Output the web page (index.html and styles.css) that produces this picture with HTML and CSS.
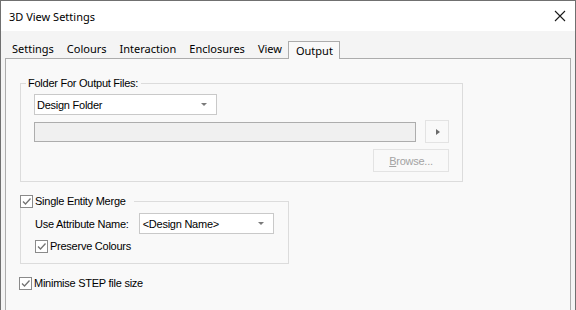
FILE: index.html
```html
<!DOCTYPE html>
<html lang="en">
  <head>
    <meta charset="UTF-8" />
    <title>3D View Settings</title>
    <link rel="stylesheet" href="styles.css">
  </head>
  <body>
    <div class="window">
      <div class="titlebar">
        <span class="title">3D View Settings</span>
        <svg class="close" width="12" height="12" viewBox="0 0 12 12">
          <path d="M1 1 L11 11 M11 1 L1 11" stroke="#1a1a1a" stroke-width="1.1" fill="none" />
        </svg>
      </div>

      <div class="client">
        <div class="tabs">
          <span class="tab">Settings</span>
          <span class="tab">Colours</span>
          <span class="tab">Interaction</span>
          <span class="tab">Enclosures</span>
          <span class="tab">View</span>
          <span class="tab active">Output</span>
        </div>

        <div class="panel">
          <div class="group folder-group">
            <div class="group-title">Folder For Output Files:</div>
            <div class="combo folder-combo">
              <span>Design Folder</span>
              <span class="combo-arrow"></span>
            </div>
            <div class="path-row">
              <div class="path-field"></div>
              <button class="arrow-btn" aria-label="More">
                <svg width="4" height="6" viewBox="0 0 4 6">
                  <path d="M0 0 L4 3 L0 6 Z" fill="#6a6a6a" />
                </svg>
              </button>
            </div>
            <div class="browse-row">
              <button class="browse" disabled><u>B</u>rowse...</button>
            </div>
          </div>

          <div class="group merge-group">
            <label class="group-title check-title">
              <span class="check"><svg width="11" height="11" viewBox="0 0 11 11"><path d="M2 5.5 L4.5 8 L9.5 2.5" stroke="#737373" stroke-width="1.3" fill="none" /></svg></span>
              Single Entity Merge
            </label>
            <div class="attr-row">
              <span>Use Attribute Name:</span>
              <div class="combo attr-combo">
                <span>&lt;Design Name&gt;</span>
                <span class="combo-arrow"></span>
              </div>
            </div>
            <label class="checkline">
              <span class="check"><svg width="11" height="11" viewBox="0 0 11 11"><path d="M2 5.5 L4.5 8 L9.5 2.5" stroke="#737373" stroke-width="1.3" fill="none" /></svg></span>
              Preserve Colours
            </label>
          </div>

          <label class="checkline minimise">
            <span class="check"><svg width="11" height="11" viewBox="0 0 11 11"><path d="M2 5.5 L4.5 8 L9.5 2.5" stroke="#737373" stroke-width="1.3" fill="none" /></svg></span>
            Minimise STEP file size
          </label>
        </div>
      </div>
    </div>
  </body>
</html>
```

FILE: styles.css
```css
* {
  margin: 0;
  padding: 0;
  box-sizing: border-box;
}

body {
  width: 576px;
  height: 310px;
  overflow: hidden;
  background: #f4f4f4;
  font-family: "Liberation Sans", Arial, sans-serif;
  font-size: 11px;
  letter-spacing: -0.25px;
  color: #000;
}

.window {
  width: 576px;
  height: 310px;
  border: 1px solid #707070;
  border-bottom: none;
  display: flex;
  flex-direction: column;
  overflow: hidden;
}

.titlebar {
  height: 30px;
  flex-shrink: 0;
  background: #fff;
  display: flex;
  align-items: center;
  justify-content: space-between;
  padding: 0 9px 0 8px;
  font-family: "Segoe UI", "Noto Sans", sans-serif;
  font-size: 11px;
  letter-spacing: 0;
}

.client {
  flex: 1;
  background: #f4f4f4;
  padding: 0 4px;
  display: flex;
  flex-direction: column;
}

/* tab strip */
.tabs {
  height: 27px;
  flex-shrink: 0;
  display: flex;
  align-items: flex-end;
  font-family: "Segoe UI", "Noto Sans", sans-serif;
  font-size: 11px;
  letter-spacing: 0;
}

.tab {
  line-height: 16px;
  padding: 0 6px 1px 7px;
}

.tab.active {
  height: 18px;
  margin-bottom: -1px;
  padding: 1px 6px 0 7px;
  border: 1px solid #acacac;
  border-bottom: none;
  background: #f9f9f9;
  position: relative;
  z-index: 1;
}

.panel {
  flex: 1;
  background: #f9f9f9;
  border: 1px solid #acacac;
  border-bottom: none;
  padding: 0 0 0 14px;
}

/* group boxes */
.group {
  border: 1px solid #dcdcdc;
}

.group-title {
  display: flex;
  align-items: center;
  width: fit-content;
  line-height: 14px;
  margin: -8px 0 0 -8px;
  padding: 0 3px 0 2px;
  background: #f9f9f9;
}

.folder-group {
  width: 443px;
  margin-top: 24px;
  padding: 0 13px 9px;
}

.combo {
  height: 21px;
  background: #fff;
  border: 1px solid #c9c9c9;
  display: flex;
  align-items: center;
  justify-content: space-between;
  padding: 0 9px 0 2px;
}

.combo-arrow {
  width: 0;
  height: 0;
  border-left: 3px solid transparent;
  border-right: 3px solid transparent;
  border-top: 3px solid #7a7a7a;
}

.folder-combo {
  width: 183px;
  margin-top: 4px;
}

.path-row {
  display: flex;
  align-items: center;
  gap: 9px;
  margin-top: 5px;
}

.path-field {
  width: 382px;
  height: 20px;
  background: #f0f0f0;
  border: 1px solid #adadad;
}

.arrow-btn {
  width: 24px;
  height: 23px;
  background: #f9f9f9;
  border: 1px solid #e3e3e3;
  display: flex;
  align-items: center;
  justify-content: center;
  padding-left: 1px;
}

.browse-row {
  display: flex;
  justify-content: flex-end;
  margin-top: 6px;
}

.browse {
  width: 76px;
  height: 23px;
  background: #f9f9f9;
  border: 1px solid #e3e3e3;
  font: inherit;
  letter-spacing: inherit;
  color: #a3a3a3;
}

.merge-group {
  width: 269px;
  height: 63px;
  margin-top: 19px;
  padding: 0 0 0 14px;
}

.check-title {
  margin-left: -15px;
  padding: 0 8px 0 0;
}

.check {
  width: 13px;
  height: 13px;
  border: 1px solid #8a8a8a;
  background: #fff;
  display: inline-flex;
  align-items: center;
  justify-content: center;
  margin-right: 2px;
}

.attr-row {
  display: flex;
  align-items: center;
  margin-top: 5px;
}

.attr-combo {
  width: 135px;
  margin-left: 10px;
  padding-left: 3px;
}

.checkline {
  display: flex;
  align-items: center;
  line-height: 13px;
  margin-top: 6px;
}

.minimise {
  margin: 13px 0 0 -1px;
}
```
